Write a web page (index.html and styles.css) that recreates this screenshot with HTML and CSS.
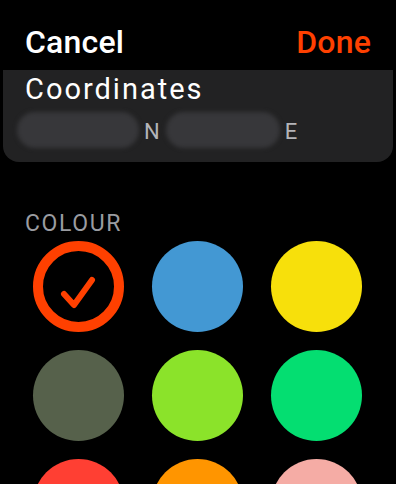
FILE: index.html
```html
<!DOCTYPE html>
<html>
<head>
<meta charset="utf-8">
<link rel="stylesheet" href="styles.css">
</head>
<body>
<div class="screen">
  <header class="nav">
    <span class="nav-cancel">Cancel</span>
    <span class="nav-done">Done</span>
  </header>
  <section class="card">
    <div class="card-title">Coordinates</div>
    <div class="coords">
      <span class="blur blur-lat"></span>
      <span class="dir">N</span>
      <span class="blur blur-lon"></span>
      <span class="dir">E</span>
    </div>
  </section>
  <div class="section-label">COLOUR</div>
  <div class="swatches">
    <div class="swatch selected">
      <svg class="check" viewBox="0 0 90 90" width="90" height="90">
        <path d="M30 52 L40 63 L58 38" fill="none" stroke="#ff4000" stroke-width="6" stroke-linecap="round" stroke-linejoin="round"/>
      </svg>
    </div>
    <div class="swatch c-blue"></div>
    <div class="swatch c-yellow"></div>
    <div class="swatch c-olive"></div>
    <div class="swatch c-lime"></div>
    <div class="swatch c-green"></div>
    <div class="swatch c-red"></div>
    <div class="swatch c-orange"></div>
    <div class="swatch c-pink"></div>
  </div>
</div>
</body>
</html>
```
FILE: styles.css
```css
html, body {
  margin: 0;
  padding: 0;
  background: #000;
}
body {
  font-family: "Roboto", "Inter", sans-serif;
  color: #fff;
  width: 396px;
  height: 484px;
  overflow: hidden;
}
.screen {
  display: flex;
  flex-direction: column;
}
.nav {
  height: 70px;
  display: flex;
  justify-content: space-between;
  align-items: flex-start;
  padding: 0 25px;
  box-sizing: border-box;
}
.nav span {
  font-size: 32px;
  line-height: 1;
  margin-top: 26px;
  font-weight: 500;
  letter-spacing: 0.2px;
}
.nav-cancel { color: #fff; }
.nav-done { color: #ff4000; }
.card {
  margin: 0 3px;
  background: #222223;
  border-radius: 0 0 16px 16px;
  height: 92px;
  padding: 0 0 0 22px;
  box-sizing: border-box;
}
.card-title {
  font-size: 29px;
  line-height: 1;
  padding-top: 5px;
  letter-spacing: 2px;
}
.coords {
  display: flex;
  align-items: center;
  margin-top: 6px;
  margin-left: -8px;
  height: 40px;
}
.blur {
  display: block;
  height: 36px;
  background: #37373a;
  border-radius: 18px;
  filter: blur(2px);
}
.blur-lat { width: 122px; }
.blur-lon { width: 114px; margin-left: 6px; }
.dir {
  font-size: 22px;
  color: #b4b4b8;
  margin-left: 5px;
  margin-top: 2px;
}
.section-label {
  margin-top: 50px;
  padding-left: 25px;
  font-size: 23px;
  line-height: 1;
  color: #9a9ca1;
  letter-spacing: 1.6px;
}
.swatches {
  margin-top: 6px;
  padding-left: 33px;
  display: grid;
  grid-template-columns: repeat(3, 91px);
  column-gap: 28px;
  row-gap: 18px;
}
.swatch {
  width: 91px;
  height: 91px;
  border-radius: 50%;
  box-sizing: border-box;
}
.selected {
  border: 10px solid #ff4000;
  display: flex;
  align-items: center;
  justify-content: center;
}
.check {
  flex: none;
}
.c-blue { background: #4398d3; }
.c-yellow { background: #f7e00b; }
.c-olive { background: #56614b; }
.c-lime { background: #8be32a; }
.c-green { background: #04de71; }
.c-red { background: #ff3f33; }
.c-orange { background: #ff9500; }
.c-pink { background: #f5aca5; }
```
